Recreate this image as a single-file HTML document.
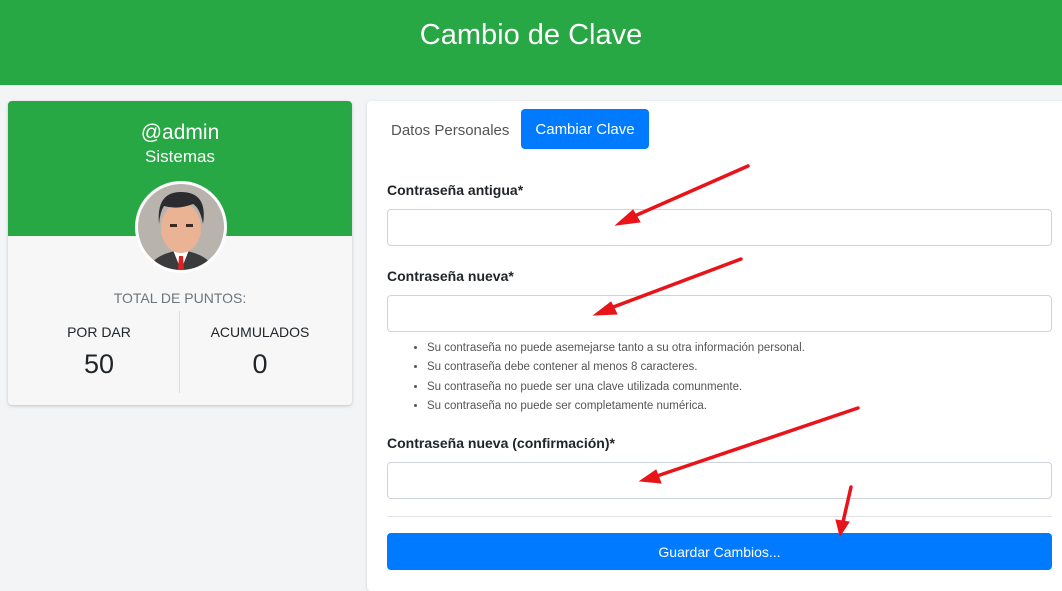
<!DOCTYPE html><html><head><style>
body{margin:0;width:1062px;height:581px;background:#f3f4f6;font-family:"Liberation Sans",sans-serif;position:relative;overflow:hidden;color:#212529}
.hdr{position:absolute;left:0;top:0;width:1062px;height:85px;background:#28a745;color:#fff;font-size:29px;text-align:center;line-height:70px}
.lc{position:absolute;left:8px;top:101px;width:344px;height:304px;background:#f7f7f7;border-radius:4px;box-shadow:0 1px 3px rgba(0,0,0,.2);overflow:hidden}
.lg{position:absolute;left:0;top:0;width:344px;height:135px;background:#28a745;color:#fff;text-align:center}
.av{position:absolute;left:127px;top:80px;width:86px;height:86px;border-radius:50%;border:3px solid #fff;background:#b9b3ad;overflow:hidden}
.rc{position:absolute;left:367px;top:101px;width:700px;height:490px;background:#fff;border-radius:4px;box-shadow:0 1px 3px rgba(0,0,0,.15)}
.lab{position:absolute;left:387px;font-weight:bold;font-size:14px}
.inp{position:absolute;left:387px;width:663px;height:35px;border:1px solid #ced4da;border-radius:4px;background:#fff}
ul{position:absolute;left:400px;top:339px;margin:0;padding-left:27px;font-size:11.5px;color:#555;line-height:19.3px}
</style></head><body>
<div class="hdr">Cambio de Clave</div>
<div class="lc">
<div class="lg"><div style="font-size:21px;padding-top:20px;line-height:24px">@admin</div><div style="font-size:17px;line-height:24px">Sistemas</div></div>
<div class="av"><svg width="86" height="86" viewBox="0 0 86 86"><path d="M10 86 Q15 70 43 66 Q71 70 76 86Z" fill="#3b3b3e"/><path d="M35 66 L43 86 L51 66Z" fill="#fff"/><path d="M41 72h4l1 14h-6z" fill="#d22"/><ellipse cx="43" cy="44" rx="20" ry="25" fill="#eab393"/><path d="M21 40 Q18 8 43 8 Q70 8 65 40 Q62 24 55 20 Q40 26 26 22 Q22 28 21 40Z" fill="#2c2c30"/><rect x="32" y="40" width="7" height="3" fill="#3a2a22"/><rect x="48" y="40" width="7" height="3" fill="#3a2a22"/></svg></div>
<div style="position:absolute;top:189px;width:344px;text-align:center;font-size:14px;color:#6c757d">TOTAL DE PUNTOS:</div>
<div style="position:absolute;left:171px;top:210px;width:1px;height:82px;background:#ddd"></div>
<div style="position:absolute;left:0;top:223px;width:182px;text-align:center;font-size:14px">POR DAR</div>
<div style="position:absolute;left:172px;top:223px;width:160px;text-align:center;font-size:14px">ACUMULADOS</div>
<div style="position:absolute;left:0;top:248px;width:182px;text-align:center;font-size:27px">50</div>
<div style="position:absolute;left:172px;top:248px;width:160px;text-align:center;font-size:27px">0</div>
</div>
<div class="rc"></div>
<div style="position:absolute;left:391px;top:122px;font-size:15px;color:#555">Datos Personales</div>
<div style="position:absolute;left:521px;top:109px;width:128px;height:40px;background:#007bff;border-radius:4px;color:#fff;font-size:15px;text-align:center;line-height:42px">Cambiar Clave</div>
<div class="lab" style="top:182px">Contraseña antigua*</div>
<div class="inp" style="top:209px"></div>
<div class="lab" style="top:268px">Contraseña nueva*</div>
<div class="inp" style="top:295px"></div>
<ul><li>Su contraseña no puede asemejarse tanto a su otra información personal.</li><li>Su contraseña debe contener al menos 8 caracteres.</li><li>Su contraseña no puede ser una clave utilizada comunmente.</li><li>Su contraseña no puede ser completamente numérica.</li></ul>
<div class="lab" style="top:435px">Contraseña nueva (confirmación)*</div>
<div class="inp" style="top:462px"></div>
<div style="position:absolute;left:387px;top:516px;width:665px;height:1px;background:#e3e3e3"></div>
<div style="position:absolute;left:387px;top:533px;width:665px;height:37px;background:#007bff;border-radius:4px;color:#fff;font-size:14px;text-align:center;line-height:39px">Guardar Cambios...</div>
<svg style="position:absolute;left:0;top:0" width="1062" height="581">
<g stroke="#e8141a" stroke-width="3.5" fill="#e8141a" stroke-linecap="round">
<line x1="748" y1="166" x2="630" y2="218"/><polygon points="616,225 633,210 640,222" stroke-width="1"/>
<line x1="741" y1="259" x2="608" y2="309"/><polygon points="594,315 611,302 617,314" stroke-width="1"/>
<line x1="858" y1="408" x2="654" y2="477"/><polygon points="640,481 656,470 661,483" stroke-width="1"/>
<line x1="851" y1="487" x2="843" y2="522"/><polygon points="840,536 836,520 849,522" stroke-width="1"/>
</g></svg>
</body></html>
